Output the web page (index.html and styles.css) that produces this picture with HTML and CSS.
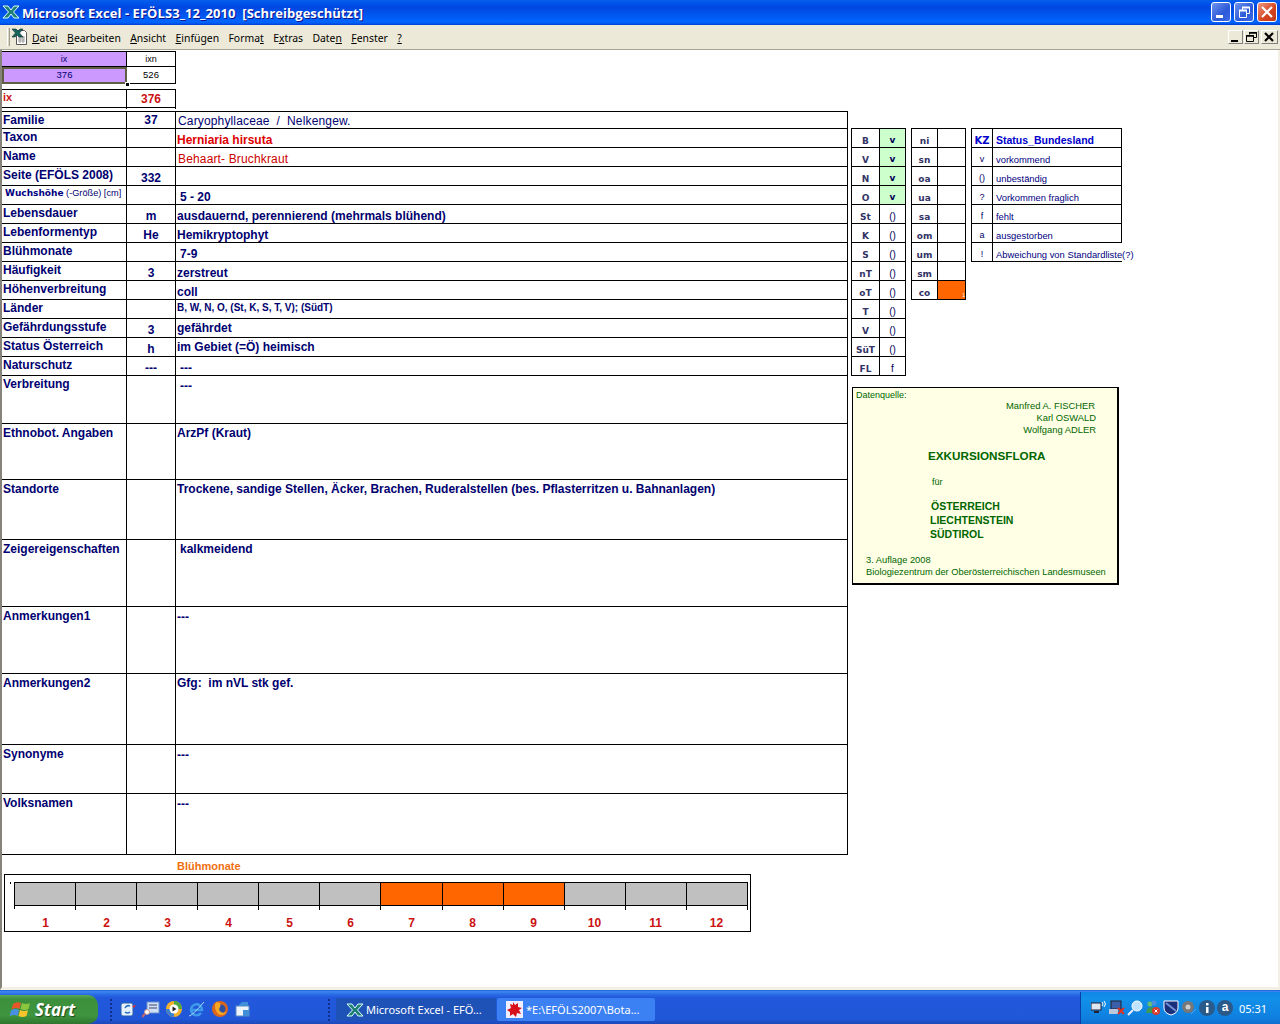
FILE: index.html
```html
<!DOCTYPE html>
<html lang="de">
<head>
    <meta charset="UTF-8">
    <title>Microsoft Excel - EFÖLS3_12_2010</title>
    <link rel="stylesheet" href="styles.css">
</head>
<body>
<div class="window">
    <div class="titlebar">
        <svg class="title-icon" width="18" height="16" viewBox="0 0 18 16">
            <path d="M1 2h5l3 4 3-4h5l-5.500 6 5.500 6h-5l-3-4-3 4H1l5.500-6z" fill="#1f7f72" stroke="#dff" stroke-width="1"/>
        </svg>
        <div class="title-text">Microsoft Excel - EFÖLS3_12_2010&nbsp; [Schreibgeschützt]</div>
        <div class="title-btn">
            <svg width="20" height="20" viewBox="0 0 20 20"><rect x="5" y="13" width="7" height="3" fill="#fff"/></svg>
        </div>
        <div class="title-btn">
            <svg width="20" height="20" viewBox="0 0 20 20"><path d="M8.500 8.500V5.500h7v6h-3M5.500 8.500h7v7h-7z" fill="none" stroke="#fff" stroke-width="1"/><path d="M5 8.500h8M8 5.500h8" stroke="#fff" stroke-width="2"/></svg>
        </div>
        <div class="title-btn close">
            <svg width="20" height="20" viewBox="0 0 20 20"><path d="M5 5l10 10M15 5L5 15" stroke="#fff" stroke-width="2.200"/></svg>
        </div>
    </div>

    <div class="menubar">
        <div class="gripper"></div>
        <svg class="doc-icon" width="18" height="18" viewBox="0 0 18 18">
            <path d="M5.500 2.500h8l2 2v12h-10z" fill="#fff" stroke="#555"/>
            <path d="M7 9h7M7 11h7M7 13h7M9 8v7M12 8v7" stroke="#9a9a9a"/>
            <path d="M1 1h4l2 2 2-2h3l-3.500 4 3.500 4H8L6 7 4 9H1l3.500-4z" fill="#17665c" stroke="#0b2f2b" stroke-width=".6"/>
        </svg>
        <span class="menu-item"><u>D</u>atei</span>
        <span class="menu-item"><u>B</u>earbeiten</span>
        <span class="menu-item"><u>A</u>nsicht</span>
        <span class="menu-item"><u>E</u>infügen</span>
        <span class="menu-item">Forma<u>t</u></span>
        <span class="menu-item">E<u>x</u>tras</span>
        <span class="menu-item">Date<u>n</u></span>
        <span class="menu-item"><u>F</u>enster</span>
        <span class="menu-item"><u>?</u></span>
        <div class="mdi-btns">
            <div class="mdi-btn"><svg width="15" height="14" viewBox="0 0 15 14"><rect x="3" y="10" width="7" height="2" fill="#000"/></svg></div>
            <div class="mdi-btn"><svg width="15" height="14" viewBox="0 0 15 14"><path d="M5.500 4.500V2.500h7v5h-3M2.500 5.500h7v6h-7z" fill="none" stroke="#000"/><path d="M2 6h8M5 3h8" stroke="#000" stroke-width="1.500"/></svg></div>
            <div class="mdi-btn wide"><svg width="17" height="14" viewBox="0 0 17 14"><path d="M4 3l8 8M12 3l-8 8" stroke="#000" stroke-width="2.200"/></svg></div>
        </div>
    </div>

    <div class="sheet">
        <div class="sheet-left">
            <div class="ix-table">
                <div class="ix-head purple">ix</div>
                <div class="ix-head black">ixn</div>
                <div class="ix-val purple selected">376</div>
                <div class="ix-val black">526</div>
                <div class="sel-handle"></div>
            </div>

            <div class="ix-row">
                <div class="ix-label">ix</div>
                <div class="ix-num">376</div>
            </div>

            <div class="main-table">
                <div class="lbl">Familie</div><div class="num first">37</div><div class="val first plain">Caryophyllaceae&nbsp; /&nbsp; Nelkengew.</div>
                <div class="lbl">Taxon</div><div class="num"></div><div class="val taxon">Herniaria hirsuta</div>
                <div class="lbl">Name</div><div class="num"></div><div class="val plain red">Behaart- Bruchkraut</div>
                <div class="lbl">Seite (EFÖLS 2008)</div><div class="num">332</div><div class="val"></div>
                <div class="lbl wuchs"><b>Wuchshöhe</b> (-Größe) [cm]</div><div class="num"></div><div class="val ind">5 - 20</div>
                <div class="lbl">Lebensdauer</div><div class="num">m</div><div class="val">ausdauernd, perennierend (mehrmals blühend)</div>
                <div class="lbl">Lebenformentyp</div><div class="num">He</div><div class="val">Hemikryptophyt</div>
                <div class="lbl">Blühmonate</div><div class="num"></div><div class="val ind">7-9</div>
                <div class="lbl">Häufigkeit</div><div class="num">3</div><div class="val">zerstreut</div>
                <div class="lbl">Höhenverbreitung</div><div class="num"></div><div class="val">coll</div>
                <div class="lbl">Länder</div><div class="num"></div><div class="val small">B, W, N, O, (St, K, S, T, V); (SüdT)</div>
                <div class="lbl">Gefährdungsstufe</div><div class="num">3</div><div class="val mid">gefährdet</div>
                <div class="lbl">Status Österreich</div><div class="num">h</div><div class="val mid">im Gebiet (=Ö) heimisch</div>
                <div class="lbl">Naturschutz</div><div class="num">---</div><div class="val ind">---</div>
                <div class="lbl">Verbreitung</div><div class="num"></div><div class="val top dash ind">---</div>
                <div class="lbl tall">Ethnobot. Angaben</div><div class="num"></div><div class="val top">ArzPf (Kraut)</div>
                <div class="lbl tall">Standorte</div><div class="num"></div><div class="val top">Trockene, sandige Stellen, Äcker, Brachen, Ruderalstellen (bes. Pflasterritzen u. Bahnanlagen)</div>
                <div class="lbl tall">Zeigereigenschaften</div><div class="num"></div><div class="val top ind">kalkmeidend</div>
                <div class="lbl tall">Anmerkungen1</div><div class="num"></div><div class="val top dash">---</div>
                <div class="lbl tall">Anmerkungen2</div><div class="num"></div><div class="val top">Gfg:&nbsp; im nVL stk gef.</div>
                <div class="lbl tall">Synonyme</div><div class="num"></div><div class="val top dash">---</div>
                <div class="lbl tall">Volksnamen</div><div class="num"></div><div class="val top dash">---</div>
            </div>

            <div class="chart-title">Blühmonate</div>
            <div class="chart">
                <div class="bars">
                    <div class="bar"></div><div class="bar"></div><div class="bar"></div><div class="bar"></div>
                    <div class="bar"></div><div class="bar"></div><div class="bar on"></div><div class="bar on"></div>
                    <div class="bar on"></div><div class="bar"></div><div class="bar"></div><div class="bar"></div>
                </div>
                <div class="months">
                    <span>1</span><span>2</span><span>3</span><span>4</span><span>5</span><span>6</span>
                    <span>7</span><span>8</span><span>9</span><span>10</span><span>11</span><span>12</span>
                </div>
            </div>
        </div>

        <div class="sheet-right">
            <div class="side-tables">
                <div class="grid-table land">
                    <div class="k">B</div><div class="v green">v</div>
                    <div class="k">V</div><div class="v green">v</div>
                    <div class="k">N</div><div class="v green">v</div>
                    <div class="k">O</div><div class="v green">v</div>
                    <div class="k">St</div><div class="v">()</div>
                    <div class="k">K</div><div class="v">()</div>
                    <div class="k">S</div><div class="v">()</div>
                    <div class="k">nT</div><div class="v">()</div>
                    <div class="k">oT</div><div class="v">()</div>
                    <div class="k">T</div><div class="v">()</div>
                    <div class="k">V</div><div class="v">()</div>
                    <div class="k">SüT</div><div class="v">()</div>
                    <div class="k">FL</div><div class="v">f</div>
                </div>
                <div class="grid-table area">
                    <div class="k">ni</div><div class="v"></div>
                    <div class="k">sn</div><div class="v"></div>
                    <div class="k">oa</div><div class="v"></div>
                    <div class="k">ua</div><div class="v"></div>
                    <div class="k">sa</div><div class="v"></div>
                    <div class="k">om</div><div class="v"></div>
                    <div class="k">um</div><div class="v"></div>
                    <div class="k">sm</div><div class="v"></div>
                    <div class="k">co</div><div class="v orange">1</div>
                </div>
                <div class="grid-table legend">
                    <div class="kz">KZ</div><div class="st head">Status_Bundesland</div>
                    <div class="kz plain">v</div><div class="st">vorkommend</div>
                    <div class="kz plain">()</div><div class="st">unbeständig</div>
                    <div class="kz plain">?</div><div class="st">Vorkommen fraglich</div>
                    <div class="kz plain">f</div><div class="st">fehlt</div>
                    <div class="kz plain">a</div><div class="st">ausgestorben</div>
                    <div class="kz plain">!</div><div class="st open">Abweichung von Standardliste(?)</div>
                </div>
            </div>

            <div class="source">
                <div class="src-label">Datenquelle:</div>
                <div class="authors">
                    <div class="a1">Manfred A. FISCHER</div>
                    <div class="a2">Karl OSWALD</div>
                    <div class="a3">Wolfgang ADLER</div>
                </div>
                <div class="flora">EXKURSIONSFLORA</div>
                <div class="fuer">für</div>
                <div class="lands">
                    <div class="l1">ÖSTERREICH</div>
                    <div>LIECHTENSTEIN</div>
                    <div>SÜDTIROL</div>
                </div>
                <div class="edition">
                    <div>3. Auflage 2008</div>
                    <div>Biologiezentrum der Oberösterreichischen Landesmuseen</div>
                </div>
            </div>
        </div>
    </div>

    <div class="taskbar">
        <div class="start">
            <svg width="22" height="20" viewBox="0 0 22 20">
                <path d="M3 4q4-3 8-1l-1.500 6q-4-2-8 .5z" fill="#e8562a"/>
                <path d="M12 3q4 2 8 0l-1.500 6q-4 2-8 0z" fill="#8cc63f"/>
                <path d="M1 10.500q4-2.500 8-.5l-1.500 6q-4-2-8 .5z" fill="#4a90e2"/>
                <path d="M10 10q4 2 8 0l-1.500 6q-4 2-8 0z" fill="#f7c52b"/>
            </svg>
            <span>Start</span>
        </div>
        <div class="task-grip"></div>
        <div class="quick">
            <svg width="18" height="18" viewBox="0 0 18 18"><rect x="2" y="3" width="12" height="13" rx="2" fill="#e6f1fb" stroke="#2a5fa8"/><path d="M6 8a4 4 0 0 1 5-2M11 12a4 4 0 0 1-5 0" stroke="#2a6fc4" stroke-width="1.500" fill="none"/><path d="M13 6l4-1-2 3z" fill="#d33"/></svg>
            <svg width="18" height="18" viewBox="0 0 18 18"><rect x="5" y="2" width="12" height="11" fill="#cfe0f7" stroke="#6b8fc9"/><path d="M7 5h8M7 8h8" stroke="#446"/><circle cx="5" cy="12" r="2.500" fill="#fff" stroke="#c98"/><path d="M3 14l-3 3" stroke="#c66" stroke-width="2"/></svg>
            <svg width="18" height="18" viewBox="0 0 18 18"><circle cx="9" cy="9" r="8" fill="#f3b02c"/><path d="M9 1a8 8 0 0 1 8 8H9z" fill="#4fa83d"/><path d="M1 9a8 8 0 0 0 8 8V9z" fill="#3a7fd0"/><circle cx="9" cy="9" r="4.500" fill="#fff"/><path d="M7.500 6.500l4 2.500-4 2.500z" fill="#222"/></svg>
            <svg width="18" height="18" viewBox="0 0 18 18"><path d="M3 10h11a5.500 5.500 0 1 0-1 3" fill="none" stroke="#3d9be9" stroke-width="2.500"/><path d="M1 16Q4 16 16 2" stroke="#a7d8ff" fill="none"/></svg>
            <svg width="18" height="18" viewBox="0 0 18 18"><circle cx="9" cy="9" r="8" fill="#d9661e"/><circle cx="10" cy="9" r="4.500" fill="#2f4f9e"/><path d="M5 2q-3 6 2 12 6 3 9-3-3 3-6 1-3-2-1-5 1-2 0-4z" fill="#f5a623"/></svg>
            <svg width="18" height="18" viewBox="0 0 18 18"><rect x="2" y="6" width="13" height="10" fill="#eef4fb" stroke="#5e89c2"/><path d="M4 6l4-4h6v4zM9 10h6v6H9z" fill="#3f8ed8"/></svg>
        </div>
        <div class="task-grip"></div>
        <div class="task-btn active">
            <svg width="18" height="16" viewBox="0 0 18 16"><path d="M1 2h5l3 4 3-4h5l-5.500 6 5.500 6h-5l-3-4-3 4H1l5.500-6z" fill="#1f7f72" stroke="#dff" stroke-width="1"/></svg>
            <span>Microsoft Excel - EFÖ...</span>
        </div>
        <div class="task-btn">
            <svg width="17" height="17" viewBox="0 0 17 17"><rect width="17" height="17" fill="#eef"/><path d="M7 1l2 3 3-2 0 4 4 1-3 2 2 4-4-1-1 4-3-3-3 2 0-4-3-2 4-2-1-4 3 1z" fill="#d8101c"/></svg>
            <span>*E:\EFÖLS2007\Bota...</span>
        </div>
        <div class="tray">
            <svg width="16" height="16" viewBox="0 0 16 16"><rect x="0" y="3" width="10" height="7" fill="#dfe7f3" stroke="#223"/><rect x="3" y="11" width="5" height="2" fill="#223"/><path d="M11 2q2 2 0 4M13 1q3 3 0 6" stroke="#fff" fill="none"/></svg>
            <svg width="16" height="16" viewBox="0 0 16 16"><rect x="2" y="1" width="10" height="8" fill="#3a5ea8" stroke="#223"/><rect x="0" y="9" width="9" height="5" fill="#bcc8dc"/><path d="M9 8l6 6M15 8l-6 6" stroke="#e0301e" stroke-width="2"/></svg>
            <svg width="16" height="16" viewBox="0 0 16 16"><circle cx="10" cy="6" r="5" fill="#bfe3ff" stroke="#fff"/><path d="M6 10l-5 5" stroke="#eef" stroke-width="2"/></svg>
            <svg width="16" height="16" viewBox="0 0 16 16"><circle cx="5" cy="4" r="2.500" fill="#6ac06a"/><circle cx="9" cy="3" r="2.500" fill="#4a8fe0"/><path d="M1 13q1-6 5-6 3 0 4 3v3z" fill="#3e9a53"/><circle cx="11" cy="11" r="4" fill="#d93a2b"/><path d="M9.500 9.500l3 3M12.500 9.500l-3 3" stroke="#fff"/></svg>
            <svg width="16" height="16" viewBox="0 0 16 16"><path d="M1 1h14v7q0 5-7 7-7-2-7-7z" fill="#1a2f7a" stroke="#fff"/><path d="M3 3l10 8" stroke="#6f8fd8" stroke-width="2"/></svg>
            <svg width="16" height="16" viewBox="0 0 16 16"><circle cx="7" cy="7" r="6" fill="#777"/><circle cx="7" cy="7" r="2.500" fill="#ccc"/><path d="M10 14l5-5" stroke="#5aa0e8"/></svg>
            <svg width="16" height="16" viewBox="0 0 16 16"><circle cx="8" cy="8" r="8" fill="#2a5a8a"/><rect x="7" y="7" width="2.500" height="6" fill="#fff"/><rect x="7" y="3" width="2.500" height="2.500" fill="#fff"/></svg>
            <div class="tray-a">a</div>
            <div class="clock">05:31</div>
        </div>
    </div>
</div>
</body>
</html>
```

FILE: styles.css
```css
* {
    box-sizing: border-box;
}

body {
    margin: 0;
    font-family: "Liberation Sans", Arial, sans-serif;
    color: #000070;
    background: #ffffff;
}

.window {
    width: 1280px;
    height: 1024px;
    display: flex;
    flex-direction: column;
    overflow: hidden;
}

/* title bar */
.titlebar {
    height: 25px;
    display: flex;
    align-items: center;
    padding: 0 3px 1px 2px;
    background: linear-gradient(180deg, #0a5fe8 0, #0058ee 8%, #0048e0 30%, #0056f0 60%, #0066ff 88%, #0055ea 94%, #003dd7 100%);
}

.title-icon {
    margin-right: 2px;
}

.title-text {
    flex: 1;
    padding-top: 1px;
    font-family: "Open Sans", sans-serif;
    font-size: 13px;
    font-weight: 700;
    letter-spacing: .06px;
    color: #ffffff;
    text-shadow: 1px 1px 0 #0f1089;
    white-space: nowrap;
}

.title-btn {
    width: 20px;
    height: 20px;
    margin-left: 3px;
    border: 1px solid #ffffff;
    border-radius: 3px;
    background: linear-gradient(135deg, #6f93ee, #2c59d8 60%, #3f6ae6);
    display: flex;
}

.title-btn svg {
    margin: -1px;
    flex: none;
}

.title-btn.close {
    background: linear-gradient(135deg, #ee9a80, #d6431f 60%, #c23a1a);
}

/* menu */
.menubar {
    height: 25px;
    display: flex;
    align-items: center;
    padding-left: 7px;
    background: #ece9d8;
    border-bottom: 1px solid #a6a498;
    font-family: "Noto Sans", sans-serif;
    font-size: 10.4px;
    color: #000000;
}

.gripper {
    width: 3px;
    height: 18px;
    border-left: 1px solid #ffffff;
    border-right: 1px solid #a09e90;
    background: #d8d5c4;
}

.doc-icon {
    margin: 0 3px 0 1px;
}

.menu-item {
    margin-right: 9.400px;
    padding-top: 2px;
}

.mdi-btns {
    margin-left: auto;
    margin-right: 2px;
    display: flex;
    gap: 1px;
}

.mdi-btn {
    width: 15px;
    height: 14px;
    background: #ece9d8;
    border-right: 1px solid #808080;
    border-bottom: 1px solid #808080;
    border-top: 1px solid #fff;
    border-left: 1px solid #fff;
    display: flex;
}

.mdi-btn svg {
    margin: -1px;
    flex: none;
}

.mdi-btn.wide {
    width: 17px;
    margin-left: 1px;
}

/* sheet */
.sheet {
    flex: 1;
    display: flex;
    padding-left: 2px;
    border-left: 2px solid #85837a;
    border-right: 2px solid #f2f0e4;
    border-bottom: 3px solid #f2f0e4;
    min-height: 0;
}

.sheet-left {
    width: 846px;
    margin-left: -2px;
    padding-top: 1px;
    flex: none;
}

.ix-table {
    position: relative;
    width: 174px;
    display: grid;
    grid-template-columns: 125px 49px;
    grid-template-rows: 15px 17px;
    border-top: 1px solid #000;
}

.ix-head,
.ix-val {
    font-size: 9px;
    text-align: center;
    line-height: 14px;
    border-right: 1px solid #000;
    border-bottom: 1px solid #000;
}

.ix-val {
    font-size: 9.500px;
    line-height: 15px;
}

.purple {
    background: #cc99ff;
}

.selected {
    border: 2px solid #5f5f45;
    border-bottom-width: 2px;
    line-height: 12px;
}

.black {
    color: #000;
}

.sel-handle {
    position: absolute;
    left: 123px;
    bottom: -3px;
    width: 5px;
    height: 5px;
    background: #000;
    border: 1px solid #fff;
}

.ix-row {
    width: 174px;
    height: 19px;
    margin-top: 5px;
    display: grid;
    grid-template-columns: 125px 49px;
    border-top: 1px solid #000;
    border-bottom: 1px solid #000;
    color: #cc1111;
    font-size: 12px;
    font-weight: 700;
}

.ix-label {
    font-size: 11px;
    padding-left: 1px;
    line-height: 15px;
    border-right: 1px solid #000;
}

.ix-num {
    text-align: center;
    line-height: 19px;
    border-right: 1px solid #000;
}

.main-table {
    margin-top: 3px;
    display: grid;
    grid-template-columns: 125px 49px 672px;
    grid-template-rows: 17px 19px 19px 19px 19px 19px 19px 19px 19px 19px 19px 19px 19px 19px 48px 56px 60px 67px 67px 71px 49px 61px;
    border-top: 1px solid #000;
    font-size: 12px;
    font-weight: 700;
}

.lbl,
.num,
.val {
    border-bottom: 1px solid #000;
    border-right: 1px solid #000;
    white-space: nowrap;
}

.lbl {
    padding-left: 1px;
    line-height: 16px;
}

.lbl.tall {
    line-height: 18px;
}

.wuchs {
    padding-left: 3px;
    font-size: 9.200px;
    font-weight: 400;
    line-height: 15px;
}

.wuchs b {
    font-family: "DejaVu Sans", sans-serif;
    font-size: 9px;
    color: #000080;
}

.num {
    text-align: center;
    padding-top: 4px;
    line-height: 15px;
}

.num.first {
    padding-top: 1px;
}

.val {
    padding: 1px 0 0 1px;
    line-height: 20px;
}

.val.first {
    padding-top: 0;
    line-height: 18px;
}

.val.plain {
    font-weight: 400;
    padding-left: 2px;
    letter-spacing: .15px;
}

.val.taxon {
    color: #dd0000;
}

.val.red {
    color: #cc0000;
}

.val.ind {
    padding-left: 4px;
}

.val.small {
    padding-top: 0;
    font-size: 10px;
    line-height: 15px;
}

.val.mid {
    padding-top: 0;
    line-height: 18px;
}

.val.top {
    padding-top: 0;
    line-height: 18px;
}

.val.dash {
    padding-top: 1px;
}

/* chart */
.chart-title {
    margin: 3px 0 0 175px;
    height: 16px;
    line-height: 16px;
    font-size: 11px;
    font-weight: 700;
    color: #ee6f11;
}

.chart {
    position: relative;
    margin: 0 0 0 2px;
    width: 747px;
    height: 58px;
    border: 1px solid #000;
    padding: 7px 2px 0 9px;
}

.chart::before {
    content: "";
    position: absolute;
    left: 5px;
    top: 7px;
    width: 1px;
    height: 2px;
    background: #000;
}

.bars {
    display: grid;
    grid-template-columns: repeat(12, 1fr);
    height: 27px;
    border-left: 1px solid #000;
}

.bar {
    background: #c0c0c0;
    border-top: 1px solid #000;
    border-right: 1px solid #000;
    border-bottom: 1px solid #000;
    height: 24px;
    position: relative;
}

.bar::after {
    content: "";
    position: absolute;
    right: -1px;
    bottom: -5px;
    width: 1px;
    height: 4px;
    background: #000;
}

.bar.on {
    background: #ff6600;
}

.months {
    display: grid;
    grid-template-columns: repeat(12, 1fr);
    margin: 7px 1px 0;
    text-align: center;
    font-size: 12px;
    font-weight: 700;
    color: #cc1111;
    line-height: 14px;
}

/* right side */
.sheet-right {
    padding: 78px 0 0 3px;
    width: 430px;
}

.side-tables {
    display: flex;
    align-items: flex-start;
    gap: 5px;
}

.grid-table {
    display: grid;
    grid-auto-rows: 19px;
    border-top: 1px solid #000;
    border-left: 1px solid #000;
    font-family: "DejaVu Sans", sans-serif;
    font-size: 9px;
}

.land {
    grid-template-columns: 28px 26px;
}

.area {
    grid-template-columns: 26px 28px;
}

.legend {
    grid-template-columns: 21px 129px;
}

.k,
.v,
.kz,
.st {
    padding-top: 4px;
    border-right: 1px solid #000;
    border-bottom: 1px solid #000;
    line-height: 15px;
    white-space: nowrap;
}

.k {
    padding-top: 5px;
    text-align: center;
    font-weight: 700;
    color: #333366;
}

.v {
    text-align: center;
    font-family: "Liberation Sans", sans-serif;
    font-size: 10px;
    color: #000055;
}

.green {
    background: #ccffcc;
    font-family: "DejaVu Sans", sans-serif;
    font-size: 9px;
    font-weight: 700;
}

.orange {
    background: #ff6600;
    color: #ffffff;
    font-size: 5px;
    text-align: right;
    line-height: 21px;
}

.kz {
    text-align: center;
    font-size: 10px;
    font-weight: 700;
    color: #0000cc;
}

.kz.plain {
    font-family: "Liberation Sans", sans-serif;
    font-weight: 400;
    color: #000066;
    font-size: 9px;
}

.st {
    padding-left: 3px;
    font-family: "Liberation Sans", sans-serif;
    font-size: 9.400px;
    color: #000080;
}

.st.head {
    font-weight: 700;
    color: #0000cc;
    font-size: 10.500px;
}

.st.open {
    overflow: visible;
    border-right: 0;
}

.source {
    margin: 11px 0 0 1px;
    width: 267px;
    height: 198px;
    padding: 1px 0 0 3px;
    background: #ffffe5;
    border: 1px solid #000;
    border-right-width: 2px;
    border-bottom-width: 2px;
    color: #006600;
    font-size: 9px;
    line-height: 12px;
}

.authors {
    margin-left: 150px;
    margin-top: -1px;
    width: 90px;
    text-align: right;
    font-size: 9.400px;
}

.a1 {
    text-align: left;
    white-space: nowrap;
}

.flora {
    margin: 13px 0 0 72px;
    font-size: 11.700px;
    font-weight: 700;
    line-height: 14px;
}

.fuer {
    margin: 13px 0 0 76px;
}

.lands {
    margin: 11px 0 0 74px;
    font-size: 10.500px;
    font-weight: 700;
    line-height: 14px;
}

.l1 {
    padding-left: 1px;
}

.edition {
    margin: 13px 0 0 10px;
    font-size: 9.300px;
    white-space: nowrap;
}

/* taskbar */
.taskbar {
    height: 34px;
    flex: none;
    display: flex;
    align-items: flex-end;
    background: linear-gradient(180deg, #1f5dd8 0, #3d87ee 5%, #2a6ee6 12%, #2259dc 22%, #2056d8 85%, #1c48b8 100%);
    color: #fff;
    position: relative;
}

.start {
    width: 98px;
    height: 29px;
    display: flex;
    align-items: center;
    gap: 3px;
    padding: 0 0 0 10px;
    border-radius: 0 10px 10px 0;
    background: linear-gradient(180deg, #5aa75a 0, #3c8f3c 15%, #3f963f 70%, #2e752e 100%);
    font-family: "Open Sans", sans-serif;
    font-style: italic;
    font-weight: 700;
    font-size: 17px;
    text-shadow: 1px 1px 1px #1c4a1c;
}

.task-grip {
    width: 3px;
    height: 22px;
    margin: 0 0 3px 12px;
    border-left: 2px dotted #0f2f8a;
}

.quick {
    display: flex;
    gap: 5px;
    align-self: flex-end;
    margin: 0 64px 6px 6px;
}

.task-btn {
    width: 160px;
    height: 23px;
    margin: 0 1px 3px 0;
    display: flex;
    align-items: center;
    gap: 2px;
    padding-left: 10px;
    background: #3c81f3;
    border-radius: 2px;
    font-family: "Noto Sans", sans-serif;
    font-size: 11px;
    white-space: nowrap;
}

.task-btn.active {
    background: #1e52b7;
    margin-left: 5px;
}

.task-btn + .task-btn {
    width: 158px;
    padding-left: 9px;
    gap: 3px;
}

.tray {
    position: absolute;
    right: 0;
    top: 2px;
    bottom: 0;
    width: 200px;
    display: flex;
    align-items: center;
    gap: 2px;
    padding-left: 10px;
    background: linear-gradient(180deg, #0f87e8 0, #1290e8 20%, #0f80e0 80%, #0f6fd0 100%);
    border-left: 1px solid #0a3fa8;
}

.tray-a {
    width: 16px;
    height: 16px;
    border-radius: 50%;
    background: #2a5a8a;
    font-family: "Liberation Sans", sans-serif;
    font-size: 12px;
    font-weight: 700;
    line-height: 15px;
    text-align: center;
}

.clock {
    margin-left: 4px;
    font-family: "Noto Sans", sans-serif;
    font-size: 11px;
}
```
